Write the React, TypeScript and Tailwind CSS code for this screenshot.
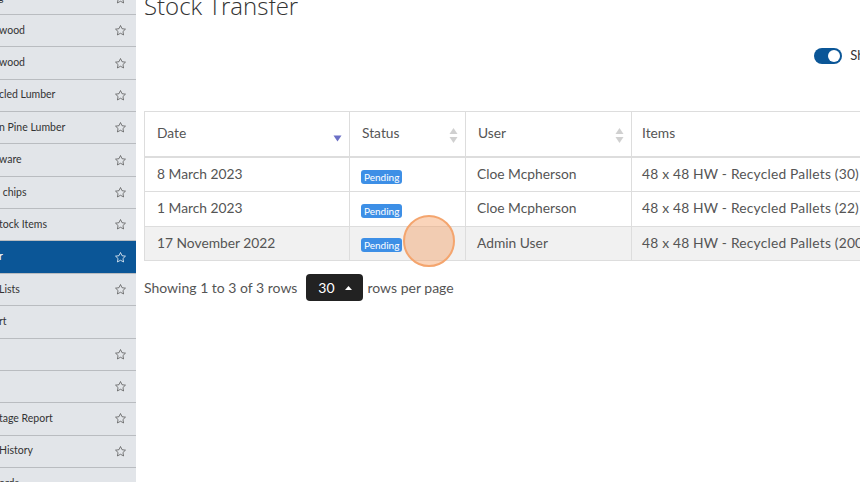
import React from "react";

const Star = ({ className = "" }: { className?: string }) => (
  <svg viewBox="0 0 24 24" width="13" height="13" fill="none" stroke="currentColor" strokeWidth="1.4" strokeLinejoin="round" className={className}>
    <path d="M12 2.8l2.8 5.9 6.4.8-4.7 4.4 1.2 6.3L12 17.1l-5.7 3.1 1.2-6.3-4.7-4.4 6.4-.8z" />
  </svg>
);

const rows: { label: string; star: boolean; active?: boolean; indent: number }[] = [
  { label: "g", star: true, indent: -2 },
  { label: "wood", star: true, indent: -1 },
  { label: "wood", star: true, indent: -1 },
  { label: "cled Lumber", star: true, indent: -1 },
  { label: "n Pine Lumber", star: true, indent: -1 },
  { label: "ware", star: true, indent: -1 },
  { label: " chips", star: true, indent: 0 },
  { label: "tock Items", star: true, indent: -1 },
  { label: "r", star: true, active: true, indent: -1 },
  { label: "Lists", star: true, indent: -1 },
  { label: "rt", star: false, indent: -1 },
  { label: "", star: true, indent: 0 },
  { label: "", star: true, indent: 0 },
  { label: "tage Report", star: true, indent: -1 },
  { label: "History", star: true, indent: -1 },
  { label: "ords", star: false, indent: -1 },
];

const SortBoth = () => (
  <svg width="9" height="17" viewBox="0 0 9 17" className="text-[#d0d0d0]">
    <path d="M4.5 1L8.5 7H0.5Z" fill="currentColor" />
    <path d="M4.5 16L8.5 10H0.5Z" fill="currentColor" />
  </svg>
);

const SortDown = () => (
  <svg width="9" height="7" viewBox="0 0 9 7">
    <path d="M0.5 0.5H8.5L4.5 6.5Z" fill="#6c70c6" />
  </svg>
);

const Badge = () => (
  <span className="inline-block rounded-[3px] bg-[#3d8fe6] px-[3px] text-[10px] leading-[14px] text-white">Pending</span>
);

const data = [
  { date: "8 March 2023", user: "Cloe Mcpherson", items: "48 x 48 HW - Recycled Pallets (30)" },
  { date: "1 March 2023", user: "Cloe Mcpherson", items: "48 x 48 HW - Recycled Pallets (22)" },
  { date: "17 November 2022", user: "Admin User", items: "48 x 48 HW - Recycled Pallets (200)" },
];

export default function App() {
  return (
    <div className="relative flex h-[482px] w-[860px] overflow-hidden bg-white text-[#333]" style={{ fontFamily: "Lato, 'Open Sans', sans-serif" }}>
      <aside className="w-[136px] shrink-0 overflow-hidden bg-[#e2e5e9]">
        <div className="-mt-[17.4px]">
          {rows.map((r, i) => (
            <div
              key={i}
              className={`flex h-[32.36px] items-center justify-between border-b border-[#b9bcc0] pr-[9px] text-[10.5px] ${r.active ? "bg-[#0b5697] text-white" : "text-[#333]"}`}
            >
              <span className="whitespace-pre" style={{ marginLeft: r.indent }}>{r.label}</span>
              {r.star && <Star className={r.active ? "text-white" : "text-[#555]"} />}
            </div>
          ))}
        </div>
      </aside>

      <main className="flex min-w-0 flex-1 flex-col pl-[8px]">
        <div className="-mt-[10px] h-[32px] text-[24px] font-light leading-[32px] text-[#333]" style={{ fontFamily: "'Open Sans', sans-serif" }}>Stock Transfer</div>

        <div className="mt-[24px] flex items-center justify-end gap-[8px] -mr-[22px]">
          <div className="flex h-[16px] w-[28px] items-center justify-end rounded-full bg-[#0b5697] pr-[2px]">
            <div className="h-[12px] w-[12px] rounded-full bg-white" />
          </div>
          <span className="text-[13px] text-[#333]">Show</span>
        </div>

        <div className="mt-[45px] w-[900px]">
          <table className="table-fixed border-collapse text-[13.8px] text-[#555]">
            <colgroup>
              <col className="w-[205px]" />
              <col className="w-[116px]" />
              <col className="w-[166px]" />
              <col className="w-[300px]" />
            </colgroup>
            <thead>
              <tr className="h-[46px] border-b-2 border-[#dddddd]">
                <th className="border border-[#dddddd] px-[12px] text-left font-normal">
                  <div className="flex items-center justify-between"><span>Date</span><span className="mt-[10px] -mr-[5px]"><SortDown /></span></div>
                </th>
                <th className="border border-[#dddddd] px-[12px] text-left font-normal">
                  <div className="flex items-center justify-between"><span>Status</span><span className="-mr-[5px] mt-[3px]"><SortBoth /></span></div>
                </th>
                <th className="border border-[#dddddd] px-[12px] text-left font-normal">
                  <div className="flex items-center justify-between"><span>User</span><span className="-mr-[5px] mt-[3px]"><SortBoth /></span></div>
                </th>
                <th className="border border-[#dddddd] px-[10px] text-left font-normal">Items</th>
              </tr>
            </thead>
            <tbody>
              {data.map((d, i) => (
                <tr key={i} className={`h-[34.5px] ${i === 2 ? "bg-[#f1f1f1]" : ""}`}>
                  <td className="border border-[#dddddd] px-[12px]">{d.date}</td>
                  <td className="border border-[#dddddd] px-[11px] pt-[3px]"><Badge /></td>
                  <td className="border border-[#dddddd] px-[11px]">{d.user}</td>
                  <td className="whitespace-nowrap border border-[#dddddd] px-[10px] tracking-[0.2px]">{d.items}</td>
                </tr>
              ))}
            </tbody>
          </table>

          <div className="mt-[13px] flex items-center text-[14px] text-[#555]">
            <span>Showing 1 to 3 of 3 rows</span>
            <span className="ml-[9px] flex h-[27px] w-[57px] items-center justify-center gap-[10px] rounded-[4px] bg-[#222] text-[14px] text-white">
              <span>30</span>
              <svg width="7" height="4" viewBox="0 0 7 4"><path d="M3.5 0L7 4H0Z" fill="white" /></svg>
            </span>
            <span className="ml-[4px]">rows per page</span>
          </div>
        </div>
      </main>

      <div className="pointer-events-none absolute left-[403px] top-[215px] h-[52px] w-[52px] rounded-full border-2 border-[#f4a56e] bg-[#f59f66]/45" />
    </div>
  );
}
